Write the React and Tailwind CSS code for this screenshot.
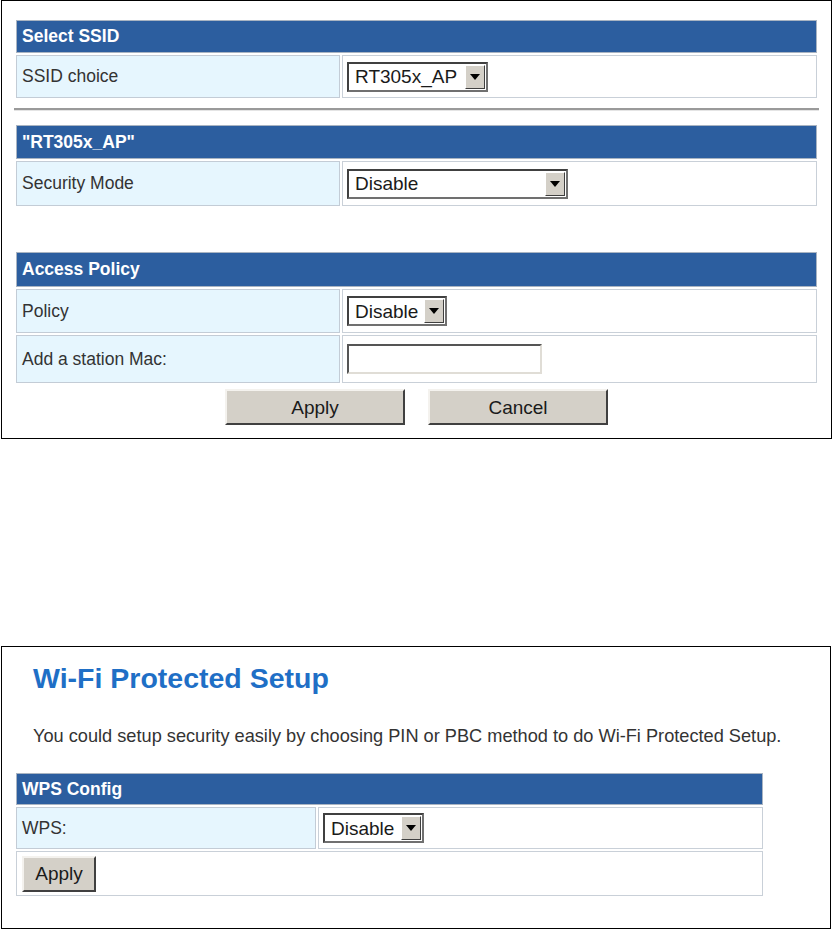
const font = { fontFamily: '"Liberation Sans", Arial, sans-serif' };

const Select = ({ value, width }) => (
  <div
    className={`flex h-[30px] border-2 border-t-[#404040] border-l-[#404040] border-r-[#707070] border-b-[#707070] bg-white ${width}`}
  >
    <div className="flex-1 flex items-center pl-[6px] text-[19px] text-[#1a1a1a] leading-none overflow-hidden whitespace-nowrap">
      {value}
    </div>
    <div className="w-[20px] m-[1px] bg-[#d4d0c8] border border-t-white border-l-white border-r-[#404040] border-b-[#404040] flex items-center justify-center">
      <svg width="10" height="6" viewBox="0 0 10 6">
        <path d="M0 0 H10 L5 6 Z" fill="#000" />
      </svg>
    </div>
  </div>
);

const Button = ({ children, width }) => (
  <button
    className={`h-[36px] bg-[#d4d0c8] border-2 border-t-[#f4f2ee] border-l-[#f4f2ee] border-r-[#404040] border-b-[#404040] text-[19px] text-[#1a1a1a] leading-none ${width}`}
  >
    {children}
  </button>
);

const Header = ({ title, className = "" }) => (
  <div
    className={`bg-[#2c5e9f] border border-[#a9b4c2] flex items-center pl-[5px] text-white font-bold text-[17.5px] ${className}`}
  >
    {title}
  </div>
);

const Row = ({ label, labelWidth, height, children }) => (
  <div className={`flex gap-[2px] ${height}`}>
    <div
      className={`bg-[#e6f6fe] border border-[#c3ccd6] flex items-center pl-[5px] text-[17.5px] text-[#333] ${labelWidth}`}
    >
      {label}
    </div>
    <div className="flex-1 bg-white border border-[#c9d0d8] flex items-center pl-[4px]">
      {children}
    </div>
  </div>
);

export default function App() {
  return (
    <div className="bg-white w-[834px] h-[930px]" style={font}>
      <div className="ml-[1px] w-[831px] h-[439px] border border-black px-[14px] pt-[19px]">
        <div className="flex flex-col gap-[2px]">
          <Header title="Select SSID" className="h-[33px]" />
          <Row label="SSID choice" labelWidth="w-[324px]" height="h-[43px]">
            <Select value="RT305x_AP" width="w-[141px]" />
          </Row>
        </div>

        <div className="mt-[10px] -mx-[2px] h-[3px] border-t-2 border-t-[#9a9a9a] border-b border-b-[#e4e4e4]" />

        <div className="mt-[14px] flex flex-col gap-[2px]">
          <Header title={'"RT305x_AP"'} className="h-[34px]" />
          <Row label="Security Mode" labelWidth="w-[324px]" height="h-[45px]">
            <Select value="Disable" width="w-[221px]" />
          </Row>
        </div>

        <div className="mt-[46px] flex flex-col gap-[2px]">
          <Header title="Access Policy" className="h-[35px]" />
          <Row label="Policy" labelWidth="w-[324px]" height="h-[44px]">
            <Select value="Disable" width="w-[100px]" />
          </Row>
          <Row label="Add a station Mac:" labelWidth="w-[324px]" height="h-[48px]">
            <input
              type="text"
              className="w-[195px] h-[30px] border-2 border-t-[#555] border-l-[#555] border-r-[#e0ddd6] border-b-[#e0ddd6] bg-white outline-none"
            />
          </Row>
        </div>

        <div className="mt-[6px] flex justify-center gap-[23px]">
          <Button width="w-[180px]">Apply</Button>
          <Button width="w-[180px]">Cancel</Button>
        </div>
      </div>

      <div className="mt-[207px] ml-[1px] w-[830px] h-[283px] border border-black px-[14px]">
        <h1 className="mt-[14px] ml-[17px] text-[28.5px] font-bold text-[#1f6fc6] leading-[34px]">
          Wi-Fi Protected Setup
        </h1>
        <p className="mt-[31px] ml-[17px] text-[18.2px] text-[#333] leading-[20px] whitespace-nowrap">
          You could setup security easily by choosing PIN or PBC method to do Wi-Fi Protected Setup.
        </p>
        <div className="mt-[27px] w-[747px] flex flex-col gap-[2px]">
          <Header title="WPS Config" className="h-[32px]" />
          <Row label="WPS:" labelWidth="w-[300px]" height="h-[42px]">
            <Select value="Disable" width="w-[101px]" />
          </Row>
          <div className="h-[45px] bg-white border border-[#c9d0d8] flex items-center pl-[5px]">
            <Button width="w-[74px]">Apply</Button>
          </div>
        </div>
      </div>
    </div>
  );
}
